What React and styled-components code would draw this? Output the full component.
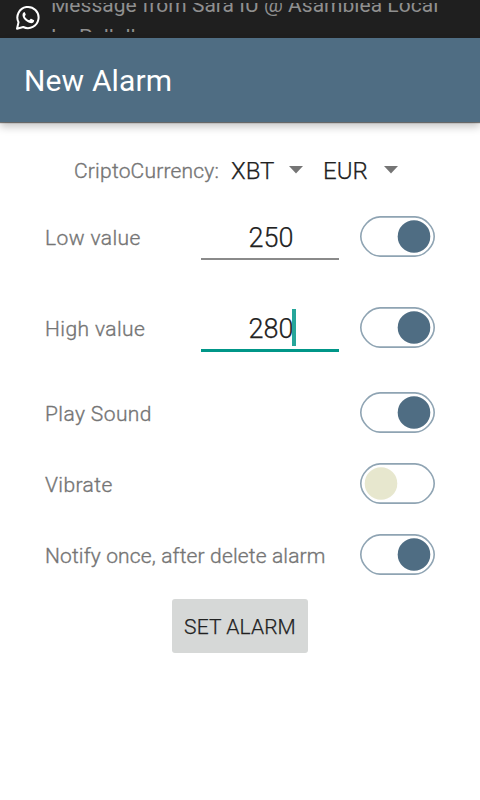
import styled, { createGlobalStyle } from "styled-components";

const GlobalStyle = createGlobalStyle`
  * {
    box-sizing: border-box;
  }
  body {
    margin: 0;
    background: #fff;
    font-family: Roboto, "Liberation Sans", sans-serif;
    overflow: hidden;
  }
`;

const Screen = styled.div`
  width: 480px;
  height: 800px;
  display: flex;
  flex-direction: column;
  background: #fff;
`;

const StatusBar = styled.div`
  height: 38px;
  display: flex;
  padding: 3px 0 0 15px;
  background: #1f1f1f;
`;

const Ticker = styled.div`
  height: 29px;
  margin-left: 11px;
  overflow: hidden;
  white-space: nowrap;
  color: #8f8f8f;
  font-size: 21px;
  line-height: 32px;
  letter-spacing: 0.03px;
`;

const TickerLine = styled.div`
  &:first-child {
    margin-top: -14px;
  }
`;

const Toolbar = styled.header`
  height: 84px;
  flex: none;
  padding-left: 24px;
  background: #4f6d83;
  box-shadow: 0 1px 1px rgba(0, 0, 0, 0.5), 0 5px 8px rgba(0, 0, 0, 0.22);
  color: #fff;
  font-size: 30px;
  line-height: 85px;
  letter-spacing: 0.15px;
`;

const Form = styled.main`
  display: flex;
  flex-direction: column;
  padding: 27px 45px 0;
`;

const CurrencyRow = styled.div`
  height: 42px;
  display: flex;
  align-items: center;
  padding: 2px 0 0 29px;
`;

const Label = styled.span`
  flex: 1;
  padding-top: 2px;
  color: #757575;
  font-size: 21px;
  font-weight: 300;
  -webkit-text-stroke: 0.35px #757575;
  line-height: 26px;
  letter-spacing: ${(p) => p.$spacing || 0.4}px;
  white-space: nowrap;
`;

const CurrencyLabel = styled(Label)`
  flex: none;
  width: 157px;
  padding-top: 0;
`;

const Spinner = styled.div`
  width: ${(p) => p.$width}px;
  display: flex;
  align-items: center;
  justify-content: space-between;
  margin-right: 20px;
  color: #212121;
  font-size: 24px;
  font-weight: 300;
  -webkit-text-stroke: 0.25px #212121;
  line-height: 28px;

  svg {
    margin-bottom: 2px;
  }
`;

const Row = styled.div`
  height: ${(p) => (p.$tall ? 91 : 71)}px;
  display: flex;
  align-items: center;
  margin-top: ${(p) => p.$gap || 0}px;
`;

const Field = styled.div`
  height: ${(p) => (p.$focused ? 49 : 47)}px;
  width: 138px;
  display: flex;
  justify-content: center;
  padding-left: 2px;
  margin-right: 21px;
  color: #212121;
  font-size: 27px;
  font-weight: 300;
  -webkit-text-stroke: 0.25px #212121;
  line-height: ${(p) => (p.$focused ? 53 : 51)}px;
  border-bottom: ${(p) => (p.$focused ? "3px solid #009688" : "2px solid #8a8a8a")};
`;

const Value = styled.span`
  position: relative;
`;

const Cursor = styled.i`
  position: absolute;
  left: calc(100% - 1px);
  top: 6px;
  width: 4px;
  height: 37px;
  background: #26a69a;
`;

const SetButton = styled.button`
  width: 136px;
  height: 54px;
  align-self: center;
  margin-top: 9px;
  padding: 2px 0 0;
  border: 0;
  border-radius: 3px;
  background: #d6d8d7;
  color: #212121;
  font: 300 21px Roboto, "Liberation Sans", sans-serif;
  -webkit-text-stroke: 0.25px #212121;
  letter-spacing: 0.1px;
`;

const Arrow = () => (
  <svg width="14" height="8" viewBox="0 0 14 8">
    <path d="M0 0h14L7 7.5z" fill="#757575" />
  </svg>
);

const Toggle = ({ on }) => (
  <svg width="75" height="41" viewBox="0 0 75 41">
    <path
      d="M20 .9H55C65 .9 74.2 11.5 74.2 20.5S65 40.1 55 40.1H20C10 40.1 .8 29.5 .8 20.5S10 .9 20 .9z"
      fill="#fff"
      stroke="#8fa4b3"
      strokeWidth="1.6"
    />
    <circle cx={on ? 54 : 21} cy="20.5" r="16.3" fill={on ? "#4f6d83" : "#e7e7ce"} />
  </svg>
);

const WhatsApp = () => (
  <svg width="25" height="30" viewBox="0 0 25 30">
    <path
      d="M2 25.700l1.500-6.400A10.600 10.600 0 1 1 8.200 24z"
      fill="none"
      stroke="#fff"
      strokeWidth="2"
      strokeLinejoin="round"
    />
    <path
      d="M9.600 9c-.6 0-2.200 1-2.100 3.200.1 2.200 2 4.700 4.400 6.400 2.500 1.700 5.200 2.100 6.400.9.8-.8.9-1.800.8-2.200l-3-1.600c-.5-.1-.9.5-1.500 1.300-.5.5-2.300-.5-3.300-1.500-1-1-1.700-2.200-1.400-2.600.6-.7 1-1.100.8-1.600l-1.100-2.300z"
      fill="#fff"
    />
  </svg>
);

const App = () => (
  <>
    <GlobalStyle />
    <Screen>
      <StatusBar>
        <WhatsApp />
        <Ticker>
          <TickerLine>Message from Sara IU @ Asamblea Local</TickerLine>
          <TickerLine>La Pallalla</TickerLine>
        </Ticker>
      </StatusBar>
      <Toolbar>New Alarm</Toolbar>
      <Form>
        <CurrencyRow>
          <CurrencyLabel $spacing={0.2}>CriptoCurrency:</CurrencyLabel>
          <Spinner $width={72}>
            XBT <Arrow />
          </Spinner>
          <Spinner $width={75}>
            EUR <Arrow />
          </Spinner>
        </CurrencyRow>
        <Row $tall>
          <Label>Low value</Label>
          <Field>
            <Value>250</Value>
          </Field>
          <Toggle on />
        </Row>
        <Row $tall>
          <Label>High value</Label>
          <Field $focused>
            <Value>
              280
              <Cursor />
            </Value>
          </Field>
          <Toggle on />
        </Row>
        <Row $gap={4}>
          <Label>Play Sound</Label>
          <Toggle on />
        </Row>
        <Row>
          <Label>Vibrate</Label>
          <Toggle />
        </Row>
        <Row>
          <Label $spacing={0.14}>Notify once, after delete alarm</Label>
          <Toggle on />
        </Row>
        <SetButton>SET ALARM</SetButton>
      </Form>
    </Screen>
  </>
);

export default App;
